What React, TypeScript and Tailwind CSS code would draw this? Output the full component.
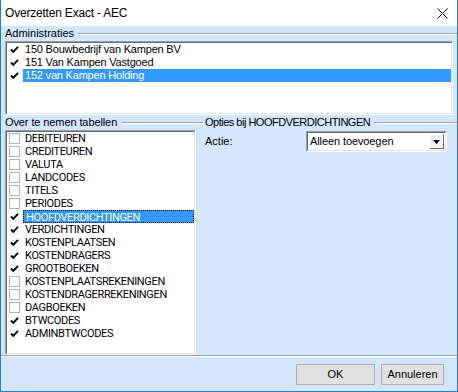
import React from 'react';

const FONT = { fontFamily: '"Liberation Sans", Arial, sans-serif' };
const CAPS_FONT = { fontFamily: 'Roboto, "Liberation Sans", Arial, sans-serif' };

const admins = [
  { label: '150 Bouwbedrijf van Kampen BV', checked: true },
  { label: '151 Van Kampen Vastgoed', checked: true },
  { label: '152 van Kampen Holding', checked: true, selected: true },
];

const tables: { label: string; checked: boolean; selected?: boolean }[] = [
  { label: 'DEBITEUREN', checked: false },
  { label: 'CREDITEUREN', checked: false },
  { label: 'VALUTA', checked: false },
  { label: 'LANDCODES', checked: false },
  { label: 'TITELS', checked: false },
  { label: 'PERIODES', checked: false },
  { label: 'HOOFDVERDICHTINGEN', checked: true, selected: true },
  { label: 'VERDICHTINGEN', checked: true },
  { label: 'KOSTENPLAATSEN', checked: true },
  { label: 'KOSTENDRAGERS', checked: true },
  { label: 'GROOTBOEKEN', checked: true },
  { label: 'KOSTENPLAATSREKENINGEN', checked: false },
  { label: 'KOSTENDRAGERREKENINGEN', checked: false },
  { label: 'DAGBOEKEN', checked: false },
  { label: 'BTWCODES', checked: true },
  { label: 'ADMINBTWCODES', checked: true },
];

const Sunken: React.FC<{ className?: string; children: React.ReactNode }> = ({ className = '', children }) => (
  <div className={`border border-t-[#a0a0a0] border-l-[#a0a0a0] border-r-white border-b-white ${className}`}>
    <div className="h-full border border-t-[#696969] border-l-[#696969] border-r-[#e3e3e3] border-b-[#e3e3e3] bg-white overflow-hidden">
      {children}
    </div>
  </div>
);

const Check: React.FC<{ checked: boolean }> = ({ checked }) => (
  <div className={`w-[11px] h-[11px] bg-white flex items-center justify-center ${checked ? '' : 'border border-[#b4b4b4]'}`}>
    {checked && (
      <svg width="11" height="11" viewBox="0 0 11 11">
        <polyline points="2,5.5 4.3,7.8 9,2.8" fill="none" stroke="#000" strokeWidth="1.9" />
      </svg>
    )}
  </div>
);

const ListRow: React.FC<{ label: string; checked: boolean; selected?: boolean; focus?: boolean; caps?: boolean }> = ({
  label,
  checked,
  selected,
  focus,
  caps,
}) => (
  <div className="flex h-[13px] items-center pl-[2px]">
    <Check checked={checked} />
    <div
      style={caps ? CAPS_FONT : undefined}
      className={`ml-[3px] flex-1 h-[13px] pl-[2px] text-[11px] leading-[13px] whitespace-nowrap ${
        caps ? 'tracking-[-0.35px]' : 'tracking-[-0.2px]'
      } ${selected ? 'bg-[#3399ff] text-white' : 'text-black'} ${
        focus ? 'border border-dotted border-black leading-[11px] pl-[1px]' : ''
      }`}
    >
      {label}
    </div>
  </div>
);

const GroupLine: React.FC<{ className?: string }> = ({ className = '' }) => (
  <div className={`h-0 border-t border-t-[#a0a0a0] border-b border-b-white ${className}`} />
);

export default function App() {
  return (
    <div style={FONT} className="w-[458px] h-[392px] flex flex-col border-x border-b border-[#1883d7] bg-[#d4e6fb] overflow-hidden">
      {/* title bar */}
      <div className="h-[26px] bg-white flex items-center justify-between pl-[4px] pr-[9px] shrink-0">
        <span className="text-[12px] text-black tracking-[-0.2px]">Overzetten Exact - AEC</span>
        <svg width="11" height="11" viewBox="0 0 11 11">
          <path d="M0.5 0.5 L10.5 10.5 M10.5 0.5 L0.5 10.5" stroke="#000" strokeWidth="1" />
        </svg>
      </div>

      {/* Administraties */}
      <div className="h-[15px] flex items-center pl-[4px]">
        <span className="text-[11px] leading-[13px] text-black">Administraties</span>
        <GroupLine className="flex-1 ml-[4px]" />
      </div>
      <Sunken className="h-[74px] mx-[4px]">
        {admins.map((a) => (
          <ListRow key={a.label} label={a.label} checked={a.checked} selected={a.selected} />
        ))}
      </Sunken>

      {/* lower section */}
      <div className="flex h-[240px]">
        <div className="w-[195px] pl-[4px] flex flex-col">
          <div className="h-[15px] flex items-center">
            <span className="text-[11px] leading-[13px] text-black tracking-[-0.1px]">Over te nemen tabellen</span>
            <GroupLine className="flex-1 ml-[4px]" />
          </div>
          <Sunken className="h-[225px]">
            {tables.map((t) => (
              <ListRow key={t.label} label={t.label} checked={t.checked} selected={t.selected} focus={t.selected} caps />
            ))}
          </Sunken>
        </div>
        <div className="flex-1 flex flex-col">
          <div className="h-[15px] flex items-center">
            <GroupLine className="w-[7px]" />
            <span className="ml-[2px] text-[11px] leading-[13px] text-black tracking-[-0.5px] whitespace-nowrap">
              Opties bij HOOFDVERDICHTINGEN
            </span>
            <GroupLine className="flex-1 ml-[4px]" />
          </div>
          <div className="flex items-center mt-[1px] pl-[9px]">
            <span className="w-[101px] text-[11px] text-black">Actie:</span>
            <Sunken className="w-[141px] h-[21px]">
              <div className="flex h-full items-center">
                <span className="flex-1 pl-[2px] text-[11px] text-black tracking-[-0.1px] whitespace-nowrap">Alleen toevoegen</span>
                <div className="w-[15px] h-[15px] mr-[1px] bg-[#f0f0f0] border border-t-white border-l-white border-r-[#696969] border-b-[#696969] flex items-center justify-center">
                  <svg width="7" height="4" viewBox="0 0 7 4">
                    <path d="M0 0 H7 L3.5 4 Z" fill="#000" />
                  </svg>
                </div>
              </div>
            </Sunken>
          </div>
        </div>
      </div>

      {/* buttons */}
      <GroupLine />
      <div className="flex-1 flex justify-end items-start pt-[7px] pr-[13px] gap-[6px]">
        <button className="w-[79px] h-[21px] bg-[#e1e1e1] border border-[#adadad] text-[11px] text-black">OK</button>
        <button className="w-[63px] h-[21px] bg-[#e1e1e1] border border-[#adadad] text-[11px] text-black">Annuleren</button>
      </div>
    </div>
  );
}
